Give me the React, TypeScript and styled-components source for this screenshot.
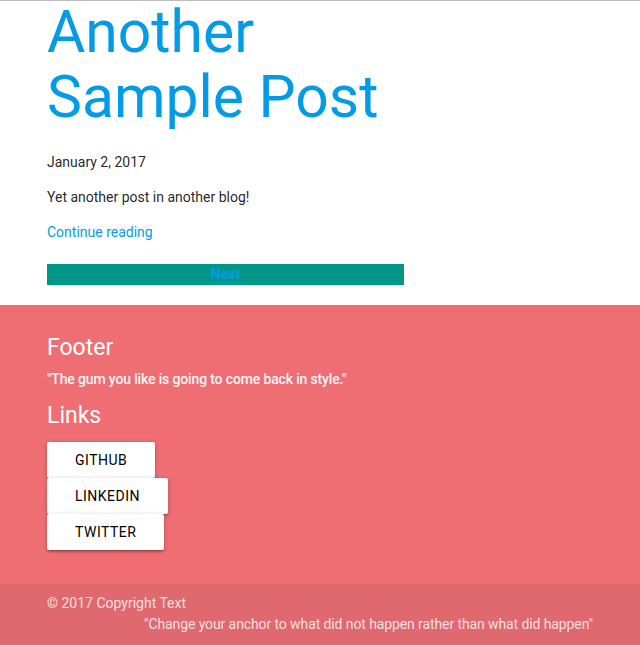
import React from "react";
import styled, { createGlobalStyle } from "styled-components";

const Global = createGlobalStyle`
  html, body { margin: 0; padding: 0; }
  body {
    font-family: Roboto, "Noto Sans", Arial, sans-serif;
    font-size: 14px;
    line-height: 1.5;
    color: rgba(0, 0, 0, 0.87);
    background: #fff;
  }
  * { box-sizing: border-box; }
`;

const Page = styled.div`
  border-top: 1px solid #bdbdbd;
`;

const Container = styled.div`
  width: 576px;
  margin: 0 auto;
  padding: 0 15px;
`;

const Main = styled.main`
  padding-bottom: 20px;
`;

const Title = styled.h1`
  margin: -1px 0 22.5px;
  font-size: 58.8px;
  line-height: 110%;
  font-weight: 400;
  color: #039be5;
`;

const Para = styled.p`
  margin: 14px 0;
`;

const Link = styled.a`
  color: #039be5;
  text-decoration: none;
`;

const NextBar = styled.div`
  width: 357px;
  height: 21px;
  margin-top: 21.6px;
  background: #009688;
  text-align: center;
  line-height: 21px;
  font-weight: 700;
  color: #039be5;
`;

const Footer = styled.footer`
  background: #ee6e73;
  padding-top: 20px;
  color: #fff;
`;

const FooterBody = styled.div`
  padding: 10px 0 34px;
`;

const Heading = styled.h5`
  margin: 0;
  font-size: 23px;
  line-height: 110%;
  font-weight: 400;
`;

const Quote = styled.p`
  margin: 8px 0 13.5px;
  font-weight: 500;
  letter-spacing: -0.15px;
  color: #f5f5f5;
`;

const LinkList = styled.ul`
  list-style: none;
  margin: 13px 0 0;
  padding: 0;
`;

const LinkItem = styled.li`
  margin: 0;
`;

const Btn = styled.a`
  display: inline-block;
  height: 36px;
  line-height: 36px;
  padding: 0 28px;
  border-radius: 2px;
  background: #fff;
  color: #000;
  font-size: 14px;
  letter-spacing: 0.5px;
  text-transform: uppercase;
  text-decoration: none;
  box-shadow: 0 2px 2px 0 rgba(0, 0, 0, 0.14), 0 3px 1px -2px rgba(0, 0, 0, 0.12),
    0 1px 5px 0 rgba(0, 0, 0, 0.2);
  vertical-align: top;
`;

const Copyright = styled.div`
  background: rgba(51, 51, 51, 0.08);
  padding: 9px 0 12px;
  color: rgba(255, 255, 255, 0.8);
`;

const CopyInner = styled(Container)`
  line-height: 21.5px;
`;

const RightQuote = styled.div`
  text-align: right;
  letter-spacing: -0.1px;
`;

export default function App() {
  const links = ["Github", "Linkedin", "Twitter"];
  return (
    <Page>
      <Global />
      <Main>
        <Container>
          <Title>
            Another
            <br />
            Sample Post
          </Title>
          <Para>January 2, 2017</Para>
          <Para>Yet another post in another blog!</Para>
          <Para>
            <Link href="#">Continue reading</Link>
          </Para>
          <NextBar>Next</NextBar>
        </Container>
      </Main>
      <Footer>
        <Container>
          <FooterBody>
            <Heading>Footer</Heading>
            <Quote>"The gum you like is going to come back in style."</Quote>
            <Heading>Links</Heading>
            <LinkList>
              {links.map((l) => (
                <LinkItem key={l}>
                  <Btn href="#">{l}</Btn>
                </LinkItem>
              ))}
            </LinkList>
          </FooterBody>
        </Container>
        <Copyright>
          <CopyInner>
            <div>© 2017 Copyright Text</div>
            <RightQuote>
              "Change your anchor to what did not happen rather than what did happen"
            </RightQuote>
          </CopyInner>
        </Copyright>
      </Footer>
    </Page>
  );
}
